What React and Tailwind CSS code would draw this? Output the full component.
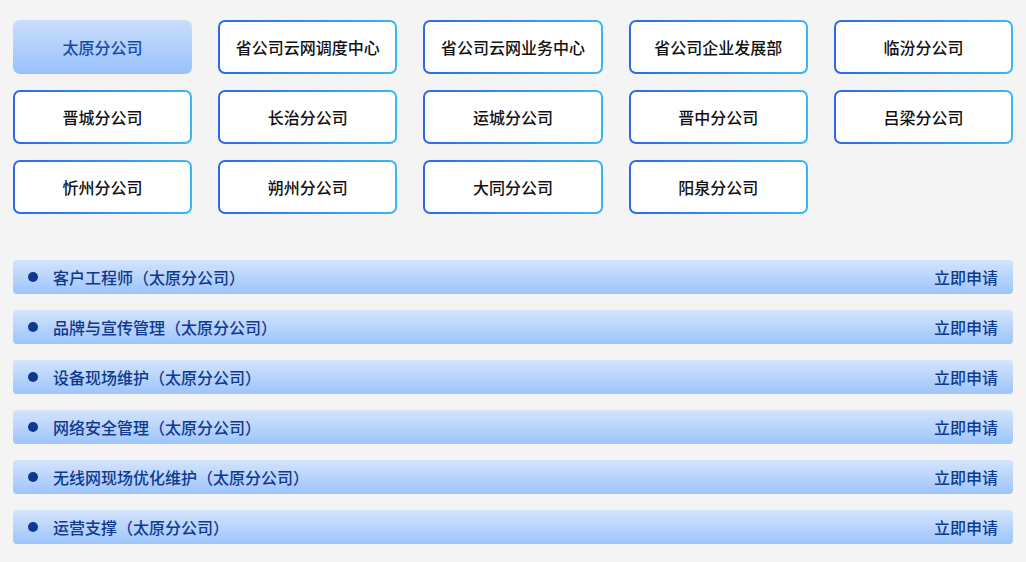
import React, { useState } from "react";

const companies = [
  "太原分公司",
  "省公司云网调度中心",
  "省公司云网业务中心",
  "省公司企业发展部",
  "临汾分公司",
  "晋城分公司",
  "长治分公司",
  "运城分公司",
  "晋中分公司",
  "吕梁分公司",
  "忻州分公司",
  "朔州分公司",
  "大同分公司",
  "阳泉分公司",
];

const jobs = [
  "客户工程师",
  "品牌与宣传管理",
  "设备现场维护",
  "网络安全管理",
  "无线网现场优化维护",
  "运营支撑",
];

export default function App() {
  const [active, setActive] = useState(0);

  return (
    <div className="min-h-[562px] bg-[#f4f4f4] px-[13px] pt-[20px] font-['Noto_Sans_CJK_SC','Noto_Sans',sans-serif]">
      <div className="grid grid-cols-5 gap-x-[26px] gap-y-[16px]">
        {companies.map((name, i) => (
          <button
            key={name}
            onClick={() => setActive(i)}
            className={
              i === active
                ? "h-[54px] rounded-[7px] bg-gradient-to-b from-[#cadefc] to-[#98c1fb] text-[16px] font-medium text-[#1848a8]"
                : "h-[54px] rounded-[7px] border-2 border-transparent [background:linear-gradient(#fff,#fff)_padding-box,linear-gradient(90deg,#2f66ec,#3ab6f4)_border-box] text-[16px] font-medium text-[#111]"
            }
          >
            {name}
          </button>
        ))}
      </div>

      <div className="mt-[46px] flex flex-col gap-[16px]">
        {jobs.map((job) => (
          <div
            key={job}
            className="flex h-[34px] items-center justify-between rounded-[4px] bg-gradient-to-b from-[#d4e4fc] to-[#9dc4fb] pl-[15px] pr-[15px] text-[16px] font-medium text-[#0e3a8e]"
          >
            <div className="flex items-center">
              <span className="h-[10px] w-[10px] rounded-full bg-[#0d3a90]" />
              <span className="ml-[15px]">
                {job}（{companies[active]}）
              </span>
            </div>
            <span>立即申请</span>
          </div>
        ))}
      </div>
    </div>
  );
}
